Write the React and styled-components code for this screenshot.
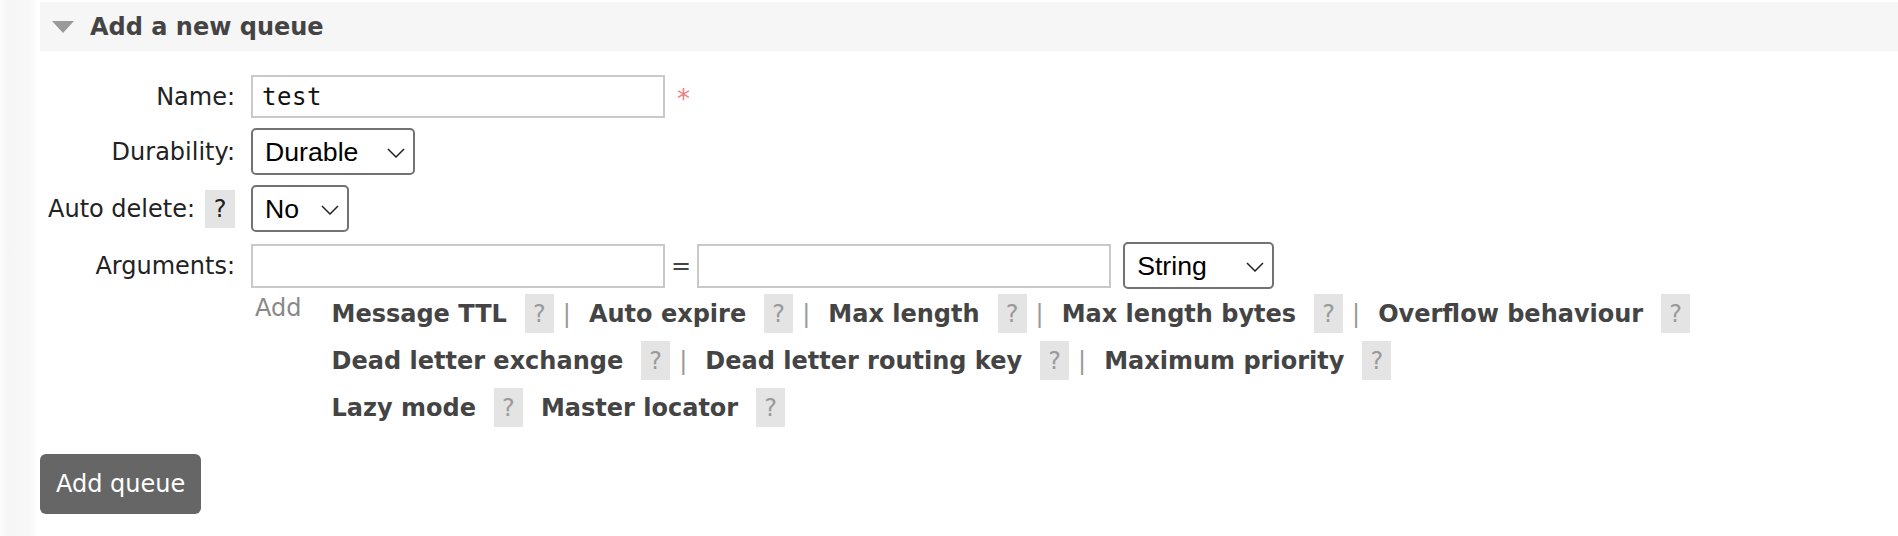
import React from 'react';
import styled, { createGlobalStyle } from 'styled-components';

// Base page styles
const GlobalStyle = createGlobalStyle`
  html, body {
    margin: 0;
    padding: 0;
    background: #fff;
  }
  body {
    font-family: "DejaVu Sans", Verdana, sans-serif;
    color: #222;
  }
  * {
    box-sizing: border-box;
  }
`;

const Page = styled.div`
  min-height: 536px;
  padding: 2px 0 0 40px;
  background: linear-gradient(
    to right,
    #fcfcfc 0,
    #f6f6f6 8px,
    #f7f7f7 28px,
    #fcfcfc 35px,
    #fff 36px
  );
`;

const SectionHeader = styled.div`
  display: flex;
  align-items: center;
  gap: 16px;
  height: 49px;
  padding-left: 12px;
  background: #f6f6f6;
`;

const Toggle = styled.span`
  width: 0;
  height: 0;
  border-left: 11.5px solid transparent;
  border-right: 11.5px solid transparent;
  border-top: 12px solid #9a9a9a;
`;

const Title = styled.h2`
  margin: 0;
  font-size: 24px;
  font-weight: bold;
  color: #444;
`;

const FormGrid = styled.div`
  display: grid;
  grid-template-columns: auto 1fr;
  align-items: center;
  margin-top: 19px;
`;

const Label = styled.label`
  display: flex;
  align-items: center;
  justify-content: flex-end;
  padding: 5px 16px 5px 8px;
  font-size: 24px;
  color: #222;
  white-space: nowrap;
`;

const Field = styled.div`
  display: flex;
  align-items: center;
  padding: 5px 0;
`;

const TextInput = styled.input`
  width: 414px;
  height: ${(p) => p.$height || 43}px;
  padding: 0 9px;
  border: 2px solid #c9c9c9;
  border-radius: 0;
  outline: none;
  font-family: "DejaVu Sans Mono", "Liberation Mono", monospace;
  font-size: 24px;
  letter-spacing: 0.5px;
  color: #111;
  background: #fff;
`;

const Mandatory = styled.span`
  margin-left: 12px;
  font-size: 26px;
  line-height: 26px;
  color: #f07d7d;
  align-self: flex-start;
  margin-top: 11px;
`;

const Equals = styled.span`
  margin: 0 6px;
  font-size: 24px;
  color: #444;
`;

const SelectWrap = styled.span`
  position: relative;
  display: inline-flex;
  margin-left: ${(p) => p.$offset || 0}px;
`;

const Select = styled.select`
  appearance: none;
  -webkit-appearance: none;
  width: ${(p) => p.$width}px;
  height: 47px;
  padding: 0 0 0 12px;
  border: 2px solid #727272;
  border-radius: 5px;
  background: #fff;
  font-family: "Liberation Sans", Arial, sans-serif;
  font-size: 26.67px;
  color: #000;
  outline: none;
`;

const Chevron = styled.svg`
  position: absolute;
  right: 10px;
  top: 50%;
  margin-top: -4px;
  pointer-events: none;
`;

const Help = styled.span`
  display: inline-flex;
  align-items: center;
  justify-content: center;
  width: ${(p) => (p.$muted ? 29 : 30)}px;
  height: ${(p) => (p.$muted ? 39 : 38)}px;
  margin-left: ${(p) => (p.$muted ? 0 : 10)}px;
  background: #e4e4e4;
  font-size: 24px;
  font-weight: normal;
  color: ${(p) => (p.$muted ? '#9a9a9a' : '#222')};
`;

const ArgsBlock = styled.div`
  grid-column: 2;
  display: flex;
  align-items: flex-start;
  gap: 30px;
  padding-left: 4px;
`;

const AddText = styled.span`
  font-size: 24px;
  line-height: 28px;
  color: #888;
`;

const ArgLinks = styled.div`
  display: flex;
  flex-direction: column;
  gap: 8px;
`;

const ArgRow = styled.div`
  display: flex;
  align-items: center;
  height: 39px;
`;

const ArgItem = styled.span`
  display: inline-flex;
  align-items: center;
  gap: 18px;

  & + & {
    margin-left: 18px;
  }
`;

const ArgLink = styled.span`
  font-size: 24px;
  font-weight: bold;
  color: #444;
  cursor: pointer;
  white-space: nowrap;
`;

const Sep = styled.span`
  margin: 0 18px 0 9px;
  font-size: 24px;
  color: #999;
`;

const SubmitButton = styled.button`
  margin-top: 27px;
  height: 60px;
  padding: 0 16px;
  border: none;
  border-radius: 6px;
  background: #666;
  color: #fff;
  font-family: "DejaVu Sans", Verdana, sans-serif;
  font-size: 24px;
  cursor: pointer;
`;

const Dropdown = ({ width, offset, options }) => (
  <SelectWrap $offset={offset}>
    <Select $width={width} defaultValue={options[0]}>
      {options.map((o) => (
        <option key={o}>{o}</option>
      ))}
    </Select>
    <Chevron width="18" height="10" viewBox="0 0 18 10">
      <path d="M1 1 L9 9 L17 1" fill="none" stroke="#222" strokeWidth="1.5" />
    </Chevron>
  </SelectWrap>
);

const argRows = [
  [
    ['Message TTL', true],
    ['Auto expire', true],
    ['Max length', true],
    ['Max length bytes', true],
    ['Overflow behaviour', false],
  ],
  [
    ['Dead letter exchange', true],
    ['Dead letter routing key', true],
    ['Maximum priority', false],
  ],
  [
    ['Lazy mode', false],
    ['Master locator', false],
  ],
];

const App = () => (
  <>
    <GlobalStyle />
    <Page>
      <SectionHeader>
        <Toggle />
        <Title>Add a new queue</Title>
      </SectionHeader>

      <FormGrid>
        <Label>Name:</Label>
        <Field>
          <TextInput type="text" defaultValue="test" />
          <Mandatory>*</Mandatory>
        </Field>

        <Label>Durability:</Label>
        <Field>
          <Dropdown width={164} options={['Durable', 'Transient']} />
        </Field>

        <Label>
          Auto delete:
          <Help>?</Help>
        </Label>
        <Field>
          <Dropdown width={98} options={['No', 'Yes']} />
        </Field>

        <Label>Arguments:</Label>
        <Field>
          <TextInput type="text" $height={44} />
          <Equals>=</Equals>
          <TextInput type="text" $height={44} />
          <Dropdown width={151} offset={12} options={['String', 'Number', 'Boolean', 'List']} />
        </Field>

        <ArgsBlock>
          <AddText>Add</AddText>
          <ArgLinks>
            {argRows.map((row, i) => (
              <ArgRow key={i}>
                {row.map(([name, sep]) => (
                  <React.Fragment key={name}>
                    <ArgItem>
                      <ArgLink>{name}</ArgLink>
                      <Help $muted>?</Help>
                    </ArgItem>
                    {sep && <Sep>|</Sep>}
                  </React.Fragment>
                ))}
              </ArgRow>
            ))}
          </ArgLinks>
        </ArgsBlock>
      </FormGrid>

      <SubmitButton type="button">Add queue</SubmitButton>
    </Page>
  </>
);

export default App;
